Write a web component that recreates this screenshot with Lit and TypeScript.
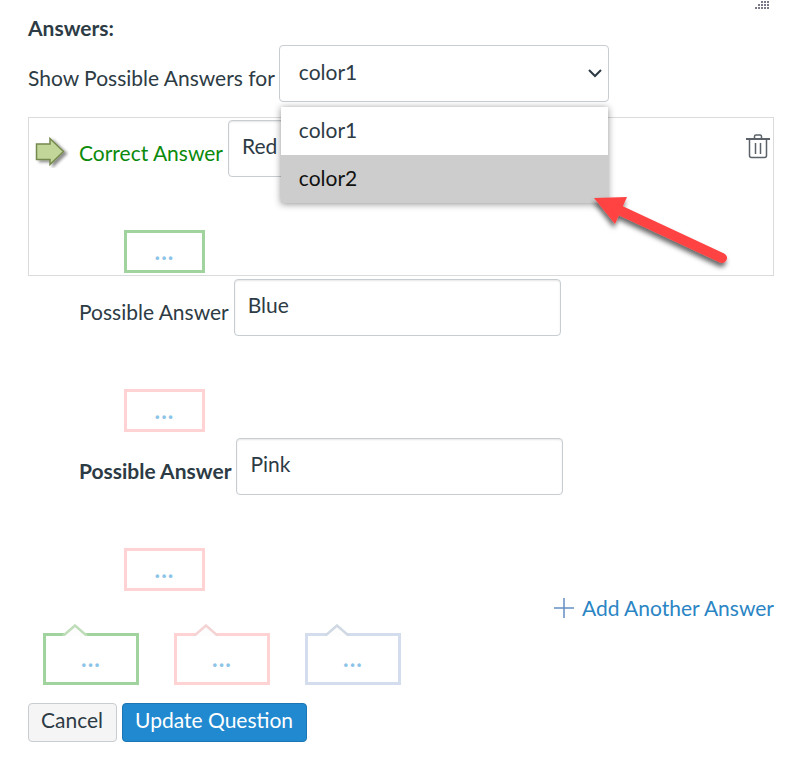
import { LitElement, html, css, svg } from "lit";
import { customElement, property, state } from "lit/decorators.js";
import { classMap } from "lit/directives/class-map.js";

interface Answer {
  label: string;
  value: string;
  kind: "correct" | "possible" | "focused";
}

const BASE = css`
  :host {
    display: block;
    box-sizing: border-box;
    font-family: Lato, "Liberation Sans", sans-serif;
    font-size: 21px;
    line-height: 28px;
    color: #2d3b45;
  }
  *,
  *::before {
    box-sizing: border-box;
  }
  button,
  input,
  select {
    font: inherit;
    color: inherit;
    margin: 0;
  }
`;

@customElement("comment-box")
export class CommentBox extends LitElement {
  @property() tone = "green";
  @property({ type: Boolean }) pointed = false;
  @property() name = "";

  static styles = [
    BASE,
    css`
      .box {
        display: block;
        width: 81px;
        height: 43px;
        padding: 0 1px 6px 0;
        border: 3px solid #a1d39f;
        background: #fff;
        color: #8cc3e8;
        font-size: 28px;
        text-align: center;
        line-height: 24px;
        position: relative;
        cursor: pointer;
      }
      .red {
        border-color: #ffd3d3;
      }
      .blue {
        border-color: #d3dded;
      }
      .pointed {
        width: 96px;
        height: 52px;
      }
      .tip {
        position: absolute;
        left: 16px;
        top: -12px;
      }
    `,
  ];

  render() {
    const tips: Record<string, string> = { green: "#bfddb9", red: "#f3d3d3", blue: "#d0d9e3" };
    return html`<button
      class=${classMap({ box: true, [this.tone]: true, pointed: this.pointed })}
      aria-label=${this.name}
    >
      ${this.pointed
        ? html`<svg class="tip" width="26" height="12" viewBox="0 0 26 12" aria-hidden="true">
            <path d="M1 12L13 1.500L25 12Z" fill="#fdfdfd" />
            <path d="M1 12L13 1.500L25 12" fill="none" stroke=${tips[this.tone]} stroke-width="2.500" />
          </svg>`
        : ""}...
    </button>`;
  }
}

@customElement("answer-row")
export class AnswerRow extends LitElement {
  @property({ attribute: false }) answer!: Answer;

  static styles = [
    BASE,
    css`
      .row {
        display: grid;
        grid-template-columns: 50px 1fr auto;
        padding: 2px 2px 2px 0;
        border: 1px solid transparent;
      }
      .correct {
        border-color: #d9dbdd;
      }
      .correct label {
        color: #0b8a0b;
      }
      .focused label {
        font-weight: 700;
      }
      .marker {
        padding: 16px 0 0 6px;
      }
      .field {
        display: flex;
        align-items: center;
        gap: 5px;
      }
      label {
        padding-top: 8px;
        white-space: nowrap;
      }
      input {
        width: 327px;
        height: 57px;
        min-width: 0;
        padding: 0 13px 6px;
        border: 1px solid #c7cdd1;
        border-radius: 4px;
        background: #fff;
        box-shadow: inset 0 1px 2px #0000001a;
      }
      .delete {
        align-self: start;
        padding: 14px 0 0;
        border: 0;
        background: none;
        cursor: pointer;
      }
      svg {
        display: block;
      }
      .comment {
        grid-column: 2;
        padding: 53px 0 0 45px;
      }
    `,
  ];

  render() {
    const { label, value, kind } = this.answer;
    const correct = kind === "correct";
    return html`<div class="row ${kind}">
      <div class="marker">
        ${correct
          ? html`<svg width="34" height="32" viewBox="0 0 34 32" aria-hidden="true">
              <defs>
                <filter id="soft" x="-20%" y="-20%" width="150%" height="150%">
                  <feDropShadow dx="3" dy="2" stdDeviation="1.500" flood-color="#000" flood-opacity=".45" />
                </filter>
              </defs>
              <path
                d="M1.500 8H15V2.500L28.500 15.500L15 28.500V23.500H1.500Z"
                fill="#c1d698"
                stroke="#76894f"
                stroke-width="1.500"
                filter="url(#soft)"
              />
            </svg>`
          : ""}
      </div>
      <div class="field">
        <label for="text">${label}</label>
        <input id="text" type="text" .value=${value} />
      </div>
      ${correct
        ? html`<button class="delete" aria-label="Delete answer">
            <svg width="25" height="26" viewBox="0 0 25 26" fill="none" stroke="#5b6269" stroke-width="1.500">
              <path d="M0 5H24" stroke-width="2" />
              <path d="M8.500 4.500V2.500Q8.500 1 10 1H14Q15.500 1 15.500 2.500V4.500" />
              <path d="M3.500 6V21.500Q3.500 23.500 5.500 23.500H18.500Q20.500 23.500 20.500 21.500V6M9.500 9V20M14.500 9V20" />
            </svg>
          </button>`
        : html`<span></span>`}
      <div class="comment">
        <comment-box tone=${correct ? "green" : "red"} name="Comment on this answer"></comment-box>
      </div>
    </div>`;
  }
}

@customElement("app-root")
export class AppRoot extends LitElement {
  @state() private options = ["color1", "color2"];
  @state() private answers: Answer[] = [
    { label: "Correct Answer", value: "Red", kind: "correct" },
    { label: "Possible Answer", value: "Blue", kind: "possible" },
    { label: "Possible Answer", value: "Pink", kind: "focused" },
  ];

  static styles = [
    BASE,
    css`
      :host {
        padding: 1px 18px 24px 28px;
        background: #fff;
      }
      .grip {
        display: block;
        margin: 0 4px 0 auto;
      }
      h1 {
        margin: 0;
        padding-top: 5px;
        font-size: 21px;
        line-height: 28px;
      }
      .chooser {
        display: flex;
        align-items: center;
        gap: 4px;
        padding: 3px 0 15px;
      }
      .chooser label {
        padding-top: 8px;
      }
      .picker {
        position: relative;
        width: 330px;
      }
      select {
        display: block;
        appearance: none;
        width: 100%;
        height: 57px;
        padding: 0 32px 4px 19px;
        border: 1px solid #c7cdd1;
        border-radius: 4px;
        background: #fff;
      }
      .chevron {
        position: absolute;
        right: 6px;
        top: 23px;
        pointer-events: none;
      }
      .menu {
        position: absolute;
        z-index: 1;
        left: 2px;
        right: 1px;
        top: 62px;
        margin: 0;
        padding: 0;
        list-style: none;
        background: #fff;
        box-shadow: 0 1px 7px #00000070;
      }
      .menu li {
        padding: 9px 18px 11px;
      }
      .menu .active {
        background: #cdcdcd;
        color: #111;
      }
      .arrow {
        position: absolute;
        z-index: 2;
        left: 311px;
        top: 147px;
        pointer-events: none;
      }
      .add {
        display: flex;
        width: fit-content;
        align-items: center;
        gap: 8px;
        margin-left: auto;
        color: #2b85c4;
        text-decoration: none;
      }
      .comments {
        display: flex;
        gap: 35px;
        padding: 11px 15px 18px;
      }
      .actions {
        display: flex;
        gap: 5px;
      }
      .actions button {
        height: 39px;
        padding: 0 13px 5px 12px;
        border: 1px solid #c7cdd1;
        border-radius: 4px;
        background: #f5f5f5;
        cursor: pointer;
      }
      .actions .primary {
        border-color: #1c76b3;
        background: #2189cf;
        color: #fff;
      }
    `,
  ];

  render() {
    const dots = [
      [7, 10, 13],
      [4, 7, 10, 13],
      [1, 4, 7, 10, 13],
    ];
    return html`
      <svg class="grip" width="15" height="8" viewBox="0 0 15 8" fill="#7c7888" aria-hidden="true">
        ${dots.map((xs, row) => xs.map((x) => svg`<rect x=${x - 1} y=${row * 3} width="2" height="2" />`))}
      </svg>
      <h1>Answers:</h1>
      <div class="chooser">
        <label for="blank">Show Possible Answers for</label>
        <div class="picker">
          <select id="blank">
            ${this.options.map((o) => html`<option>${o}</option>`)}
          </select>
          <svg class="chevron" width="16" height="11" viewBox="0 0 16 11" aria-hidden="true">
            <path d="M2 2L8 8L14 2" fill="none" stroke="#2d3b45" stroke-width="2" />
          </svg>
          <ul class="menu">
            ${this.options.map((o, i) => html`<li class=${classMap({ active: i === 1 })}>${o}</li>`)}
          </ul>
          <svg class="arrow" width="144" height="84" viewBox="0 0 144 84" aria-hidden="true">
            <defs>
              <filter id="drop" x="-10%" y="-10%" width="130%" height="140%">
                <feDropShadow dx="-1" dy="4" stdDeviation="2.500" flood-color="#000" flood-opacity=".6" />
              </filter>
            </defs>
            <g fill="#ff4242" stroke="#ff4242" filter="url(#drop)">
              <path d="M4 6L37 5L25 32Z" stroke="none" />
              <path d="M27 17L132 66" stroke-width="10" stroke-linecap="round" />
            </g>
          </svg>
        </div>
      </div>
      ${this.answers.map((a) => html`<answer-row .answer=${a}></answer-row>`)}
      <a class="add" href="#add">
        <svg width="20" height="20" viewBox="0 0 20 20" aria-hidden="true">
          <path d="M0 10H20M10 0V20" stroke="#668fc4" stroke-width="1.500" />
        </svg>
        Add Another Answer
      </a>
      <div class="comments">
        <comment-box tone="green" pointed name="Correct comment"></comment-box>
        <comment-box tone="red" pointed name="Incorrect comment"></comment-box>
        <comment-box tone="blue" pointed name="General comment"></comment-box>
      </div>
      <div class="actions">
        <button type="button">Cancel</button>
        <button type="submit" class="primary">Update Question</button>
      </div>
    `;
  }
}
